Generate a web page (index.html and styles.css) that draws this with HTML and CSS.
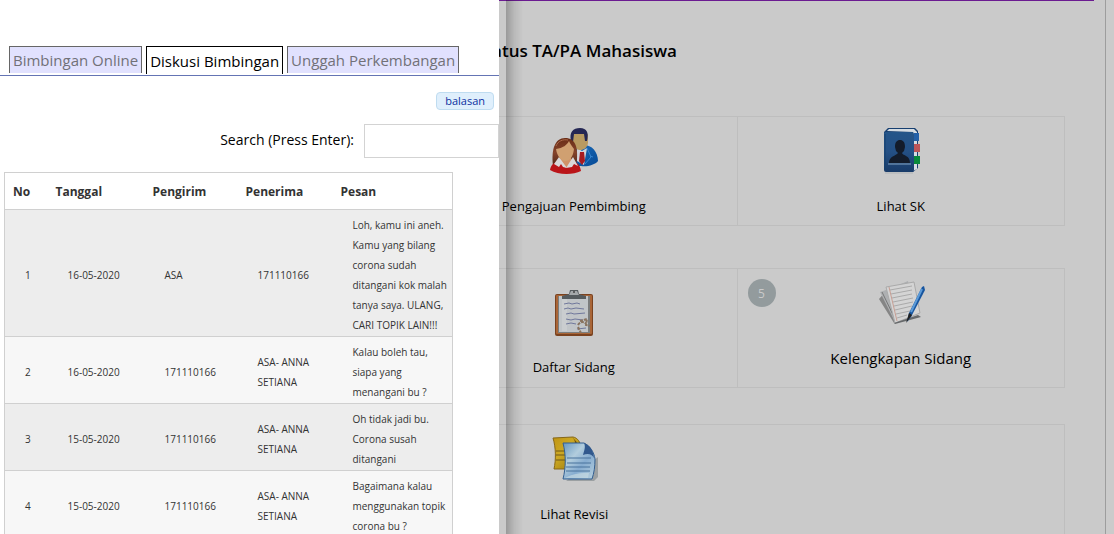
FILE: index.html
```
<!DOCTYPE html>
<html lang="id">
<head>
<meta charset="utf-8">
<title>Status TA/PA Mahasiswa</title>
<link rel="stylesheet" href="styles.css">
</head>
<body>
<main class="page">
  <section class="status">
    <h1 class="status-title">Status TA/PA Mahasiswa</h1>
    <div class="menu-row">
      <a href="#pengajuan" class="menu-item">
        <svg class="icon" viewBox="0 0 50 50" aria-hidden="true">
          <defs>
            <linearGradient id="hair" x2="0" y2="1"><stop stop-color="#6a2d16"/><stop offset=".5" stop-color="#84432a"/><stop offset="1" stop-color="#4b2416"/></linearGradient>
            <linearGradient id="suit" x2="1" y2="1"><stop stop-color="#1d6fbd"/><stop offset="1" stop-color="#064a96"/></linearGradient>
          </defs>
          <path d="M20 39c1-13 5-19 13-21 9-1 16 6 16 16-3 4-11 6-17 5z" fill="url(#suit)"/>
          <path d="M28 21l5 3 5-3-3 17-7-4z" fill="#d1d3da"/>
          <path d="M31 25h4l1 9-3 4-3-4z" fill="#a81a20"/>
          <path d="M38 21l4 9-6 7M41 29l3 1" fill="none" stroke="#3584cf"/>
          <path d="M23 7h16v9c-1 5-4 7-8 7s-6-3-7-7z" fill="#b89a61"/>
          <path d="M22 14c-2-9 2-13 9-13 7 0 9 5 7 13h-2l-1-7H25l-1 8z" fill="#252754"/>
          <path d="M4 39C2 22 6 11 16 11c11 0 14 10 11 29z" fill="url(#hair)"/>
          <path d="M11 31h11l4 7-9 5-9-5z" fill="#d19268"/>
          <path d="M1 43c1-6 5-8 9-9l7 7 7-7c5 2 7 4 8 10-8 4-23 4-31-1z" fill="#ba1519"/>
          <path d="M10 30l8 11-4-1-2-3-2 3-5-3zM24 30l-7 11 6-1 2-3 4 2z" fill="#d9d8d9"/>
          <path d="M7 22c7-1 11-4 13-8 1 3 3 5 5 8-1 8-4 12-9 12-4 0-8-5-9-12z" fill="#d0a071"/>
          <path d="M7 19c2-5 7-7 12-6" stroke="#aa694b" fill="none"/>
        </svg>
        <span>Pengajuan Pembimbing</span>
      </a>
      <a href="#sk" class="menu-item">
        <svg class="icon" viewBox="-1 0 50 50" aria-hidden="true">
          <defs><linearGradient id="book" x2="0" y2="1"><stop stop-color="#245589"/><stop offset=".5" stop-color="#245085"/><stop offset="1" stop-color="#193b68"/></linearGradient></defs>
          <path d="M7 5l4-4h27l3 3v37l-5 4H9z" fill="#173f70"/>
          <path d="M10 4l2-2h25l3 3v37l-4 2V5z" fill="#d5dce2"/>
          <path d="M37 6h5v8h-5z" fill="#2260a8"/><path d="M37 17h6v8h-6z" fill="#bd5558"/><path d="M37 29h6v8h-6z" fill="#08893a"/>
          <rect x="7" y="5" width="30" height="40" rx="2" fill="url(#book)"/>
          <path d="M8 7v35" stroke="#15406f"/>
          <path d="M18 20c0-5 2-7 5-7s5 2 5 7l-1 4-2 2c1 3 8 2 8 10H12c0-7 7-7 9-10l-2-2z" fill="#131c2b"/>
          <path d="M11 37h23" stroke="#84a4c2"/>
          <path d="M8 46h28" stroke="#aeb2b5"/>
        </svg>
        <span>Lihat SK</span>
      </a>
    </div>
    <div class="menu-row menu-row-tall">
      <a href="#daftar" class="menu-item menu-item-low">
        <svg class="icon" viewBox="0 0 50 50" aria-hidden="true">
          <rect x="6" y="6" width="38" height="42" rx="2" fill="#7a421f"/>
          <rect x="7" y="7" width="36" height="39" rx="1" fill="#a96537"/>
          <path d="M9 8h32v37H9z" fill="#7b7d7d"/>
          <path d="M10 8h29v36H10z" fill="#c1c5c8"/>
          <path d="M13 9h5v34h-5z" fill="#cacdcf"/>
          <path d="M13 11V8l7-2 1-4h8l1 4 7 2v3z" fill="#555b5e"/>
          <path d="M20 7l2-4h6l2 4z" fill="#a4a8aa"/><circle cx="25" cy="4" r="1" fill="#444"/>
          <path d="M15 16l5-1 3 1 5-1 3 1M15 21l4-1 3 1 5-1 8 1M17 26l5-1 3 1 11-1M17 31l5 1 4-1 8 1M17 36l5-1 5 1M28 41l9-1" fill="none" stroke="#70789c"/>
          <path d="M29 37c3-5 8-3 9 1M29 39l3 6M31 33l7-2-1 6 4 1" fill="none" stroke="#89735f" stroke-width="2" stroke-dasharray="3 1"/>
        </svg>
        <span>Daftar Sidang</span>
      </a>
      <a href="#kelengkapan" class="menu-item menu-item-large">
        <span class="badge">5</span>
        <svg class="icon" viewBox="0 0 50 50" aria-hidden="true">
          <path d="M3 20l15 24 6-4L10 12z" fill="#858585"/>
          <path d="M4 13l9-3 19-8 5 31-18 10z" fill="#aeb0b2"/>
          <path d="M6 13l14 29" stroke="#777"/>
          <path d="M10 8l28-5 6 31-25 10z" fill="#d4d4d4" stroke="#aaa"/>
          <path d="M14 11l22-4M15 15l21-4M16 19l20-4M17 23l20-4M18 27l19-4M19 31l17-4M20 35l14-3M21 39l10-3" stroke="#aaa"/>
          <path d="M13 8l8 34" stroke="#c79e93"/>
          <path d="M18 44l24-8 3 2-26 7z" fill="#66696b"/>
          <path d="M48 7l1 4-14 27-4 5 2-9L46 8z" fill="#17559f"/>
          <path d="M46 10L35 33" stroke="#5c9bd8" stroke-width="2"/>
          <path d="M33 34l3 2-6 8z" fill="#222"/>
        </svg>
        <span>Kelengkapan Sidang</span>
      </a>
    </div>
    <div class="menu-row menu-row-last">
      <a href="#revisi" class="menu-item">
        <svg class="icon" viewBox="0 0 50 50" aria-hidden="true">
          <defs>
            <linearGradient id="gold" x2="1" y2="1"><stop stop-color="#c09412"/><stop offset=".4" stop-color="#cca823"/><stop offset="1" stop-color="#937006"/></linearGradient>
            <linearGradient id="sheet" x2="1" y2="1"><stop stop-color="#6597c0"/><stop offset=".35" stop-color="#b2cddd"/><stop offset=".6" stop-color="#86acd0"/><stop offset="1" stop-color="#b9d2df"/></linearGradient>
          </defs>
          <path d="M4 3l20-1c5 1 7 5 8 10l-6 22H5c2-9 2-21-1-31z" fill="url(#gold)" stroke="#866719"/>
          <path d="M22 2c3 1 4 4 4 6h2c-1-2-3-5-6-6z" fill="#755108"/>
          <path d="M7 16h9M7 20h9M7 25h9" stroke="#6f5819"/>
          <path d="M17 46h28l4-4V22z" fill="#888e91" opacity=".7"/>
          <path d="M14 8h21c6 3 10 9 11 16 0 8-1 14-3 20H14c3-12 3-24 0-36z" fill="url(#sheet)" stroke="#335f91"/>
          <path d="M35 8c2 4 0 8-1 12 5-2 9-1 11 3-1-8-4-13-10-15z" fill="#31588d"/>
          <path d="M18 23h24M18 28h24M17 32h24M17 36h24" stroke="#49729c"/>
          <path d="M16 43c10-5 15-5 24-5l-1 5z" fill="#c4d9e1" opacity=".7"/>
        </svg>
        <span>Lihat Revisi</span>
      </a>
    </div>
  </section>
</main>
<aside class="drawer">
  <nav class="tabs">
    <button type="button" class="tab">Bimbingan Online</button>
    <button type="button" class="tab tab-active">Diskusi Bimbingan</button>
    <button type="button" class="tab">Unggah Perkembangan</button>
  </nav>
  <div class="actions"><button type="button" class="reply">balasan</button></div>
  <div class="search">
    <label for="search">Search (Press Enter):</label>
    <input id="search" type="text">
  </div>
  <table class="messages">
    <colgroup><col class="col-no"><col class="col-date"><col class="col-from"><col class="col-to"><col></colgroup>
    <thead><tr><th>No</th><th>Tanggal</th><th>Pengirim</th><th>Penerima</th><th>Pesan</th></tr></thead>
    <tbody>
      <tr><td>1</td><td>16-05-2020</td><td>ASA</td><td>171110166</td><td>Loh, kamu ini aneh. Kamu yang bilang corona sudah ditangani kok malah tanya saya. ULANG, CARI TOPIK LAIN!!!</td></tr>
      <tr><td>2</td><td>16-05-2020</td><td>171110166</td><td>ASA- ANNA SETIANA</td><td>Kalau boleh tau, siapa yang menangani bu ?</td></tr>
      <tr><td>3</td><td>15-05-2020</td><td>171110166</td><td>ASA- ANNA SETIANA</td><td>Oh tidak jadi bu. Corona susah ditangani</td></tr>
      <tr><td>4</td><td>15-05-2020</td><td>171110166</td><td>ASA- ANNA SETIANA</td><td>Bagaimana kalau menggunakan topik corona bu ?</td></tr>
    </tbody>
  </table>
</aside>
</body>
</html>
```
FILE: styles.css
```
* { box-sizing: border-box; }
html, body { height: 100%; }
body {
  margin: 0;
  overflow: hidden;
  background: #cbcbcb;
  color: #000;
  font-family: "Open Sans", "Noto Sans", sans-serif;
}
.page {
  min-height: 100%;
  margin-right: 8px;
  padding: 0 11px 0 381px;
  border-right: 1px solid #9d9d9d;
  background: #cacaca;
}
.status {
  padding: 0 29px;
  border-top: 1px solid #6b1b91;
}
.status-title {
  margin: 0;
  padding: 36px 0 51px 66px;
  font-size: 17px;
  line-height: 28px;
  font-weight: 600;
}
.menu-row {
  display: grid;
  grid-template-columns: 1fr 1fr;
  min-height: 110px;
  margin-bottom: 42px;
  border: 1px solid #bebebe;
}
.menu-row-tall { min-height: 120px; margin-bottom: 36px; }
.menu-row-last { min-height: 140px; margin-bottom: 0; }
.menu-item {
  position: relative;
  display: flex;
  flex-direction: column;
  align-items: center;
  gap: 19px;
  padding-top: 10px;
  color: inherit;
  font-size: 13px;
  line-height: 20px;
  text-decoration: none;
}
.menu-item:not(:last-child) { border-right: 1px solid #bebebe; }
.menu-item-low { padding-top: 19px; }
.menu-item-large { font-size: 15px; }
.icon { width: 50px; height: 50px; }
.badge {
  position: absolute;
  top: 10px;
  left: 10px;
  width: 28px;
  height: 28px;
  border-radius: 50%;
  background: #939b9d;
  color: #cacaca;
  font-size: 12px;
  line-height: 30px;
  text-align: center;
}
.drawer {
  position: fixed;
  inset: 0 auto 0 0;
  width: 499px;
  padding-top: 46px;
  background: #fff;
}
.drawer::after {
  content: "";
  position: absolute;
  inset: 0 -24px 0 auto;
  width: 17px;
  background: linear-gradient(to right, rgba(0, 0, 0, .24), rgba(0, 0, 0, .08) 50%, rgba(0, 0, 0, 0));
}
.tabs {
  display: flex;
  align-items: flex-start;
  gap: 4px;
  height: 30px;
  padding-left: 9px;
  border-bottom: 1px solid #6474b4;
}
.tab {
  height: 27px;
  padding: 1px 3px;
  border: 1px solid #666;
  border-bottom: 0;
  background: #e1e1fe;
  color: #717178;
  font: 15px/24px "Open Sans", "Noto Sans", sans-serif;
  white-space: nowrap;
}
.tab-active {
  height: 28px;
  padding-top: 2px;
  border-color: #000;
  background: #fff;
  color: #000;
}
.actions {
  display: flex;
  justify-content: flex-end;
  padding: 16px 5px 14px 0;
}
.reply {
  height: 18px;
  padding: 0 8px;
  border: 1px solid #bfdcf0;
  border-radius: 4px;
  background: #dfeffc;
  color: #0b2fa0;
  font: 11px/16px "Open Sans", "Noto Sans", sans-serif;
}
.search {
  display: flex;
  align-items: center;
  justify-content: flex-end;
  gap: 10px;
  margin-bottom: 14px;
  font-size: 14px;
  line-height: 20px;
}
.search label { padding-bottom: 2px; }
.search input {
  width: 135px;
  height: 34px;
  padding: 0 8px;
  border: 1px solid #d3d3d3;
  font: inherit;
}
.messages {
  width: 90%;
  margin-left: 4px;
  table-layout: fixed;
  border: 1px solid #d0d0d0;
  border-collapse: collapse;
  color: #333;
}
.col-no { width: 43px; }
.col-date { width: 97px; }
.col-from { width: 93px; }
.col-to { width: 95px; }
.messages th {
  height: 37px;
  padding: 1px 8px 0;
  font-size: 12px;
  line-height: 20px;
  font-weight: 700;
  text-align: left;
}
.messages td {
  padding: 5px 2px 1px 20px;
  border-top: 1px solid #d0d0d0;
  background: #f7f7f7;
  font-size: 10px;
  line-height: 20px;
}
.messages tr:nth-child(odd) td { background: #ededed; }
```
